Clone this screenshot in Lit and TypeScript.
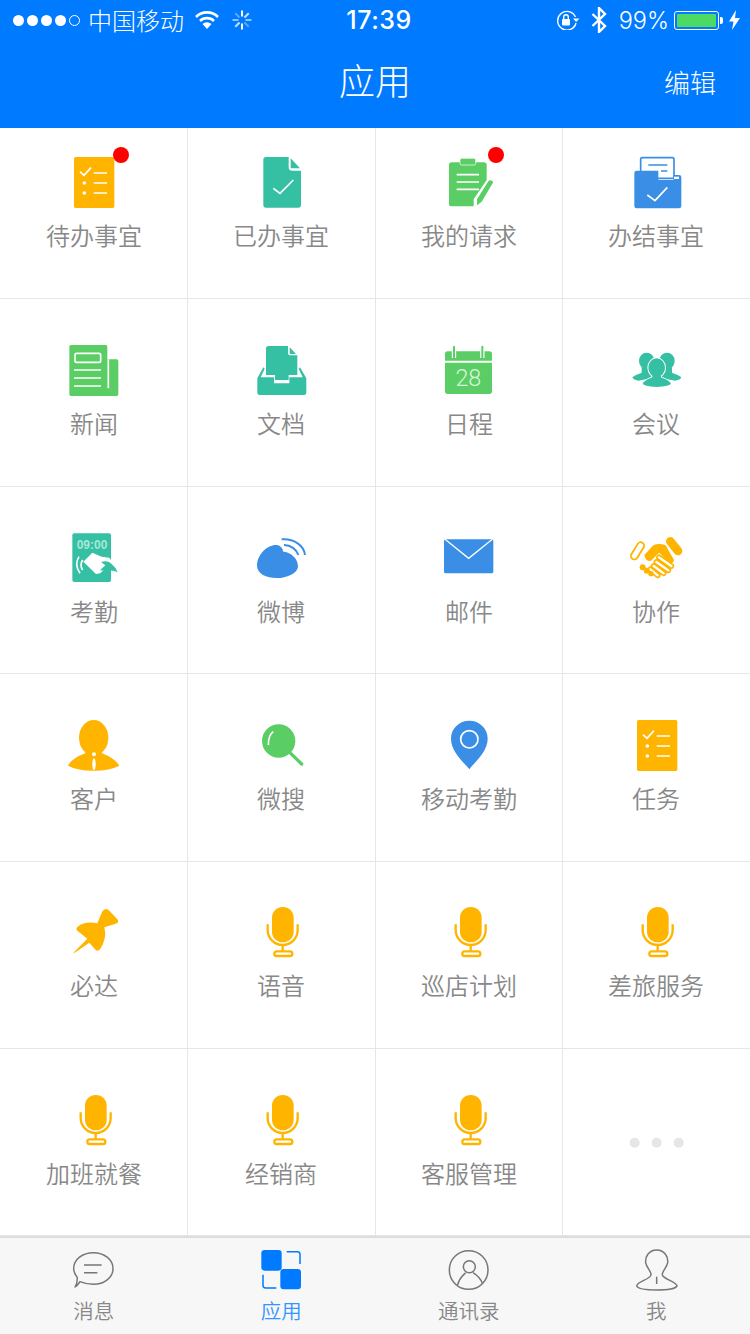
import { css, html, svg, LitElement } from "lit";
import { customElement } from "lit/decorators.js";

const AMBER = "#ffb400";
const TEAL = "#35c0a4";
const GREEN = "#5ace64";
const BLUE = "#3a8ee6";
const GREY = "#777";
const TAB_BLUE = "#007aff";

// icon paths are written in 3x coordinates, so one px on screen is 3 units
const box = (x: number, y: number, body: unknown) =>
  html`<svg class="ic" viewBox="${x} ${y} 180 156">${body}</svg>`;

const checklist = svg`
  <rect x="222" y="81" width="121" height="153" rx="5" fill=${AMBER} />
  <g fill="none" stroke="#fff" stroke-width="5">
    <path d="M240 125L252 136L273 113M281 129H321M281 159H321M281 189H321" />
  </g>
  <circle cx="253" cy="159" r="5.5" fill="#fff" />
  <circle cx="253" cy="189" r="5.5" fill="#fff" />`;

const mic = svg`
  <rect x="816" y="51" width="65" height="106" rx="32" fill=${AMBER} />
  <g fill="none" stroke=${AMBER} stroke-width="7">
    <path d="M803 103V120A45 45 0 0 0 893 120V103M848 165V184" />
    <rect x="823" y="184" width="54" height="14" rx="7" />
  </g>`;

const icons: Record<string, unknown> = {
  todo: box(192, 81, checklist),
  done: box(753, 81, svg`
    <path fill=${TEAL} d="M798 81H866V112Q866 122 876 122H903V225Q903 233 895 233H798Q790 233 790 225V89Q790 81 798 81Z" />
    <path fill=${TEAL} d="M872 85L900 115H872Z" />
    <path fill="none" stroke="#fff" stroke-width="5" d="M820 175L840 190L880 150" />`),
  request: box(192, 81, svg`
    <path fill=${GREEN} d="M230 97H326Q335 97 335 105V150L296 208V229H230Q222 229 222 221V105Q222 97 230 97Z" />
    <rect x="255" y="85" width="47" height="20" rx="5" fill=${GREEN} stroke="#fff" stroke-width="2" />
    <path fill="none" stroke="#fff" stroke-width="5" d="M245 134H312M245 156H312M245 178H312" />
    <path fill=${GREEN} d="M341 152Q348 148 355 156L320 215L306 226V208Z" />`),
  closed: box(753, 81, svg`
    <rect x="797" y="83" width="100" height="62" rx="5" fill="#fff" stroke=${BLUE} stroke-width="5" />
    <path fill="none" stroke=${BLUE} stroke-width="4" d="M820 105H877M858 123H877" />
    <path fill=${BLUE} d="M785 122H850V150H895V135H912Q919 135 919 142V228Q919 235 912 235H785Q778 235 778 228V129Q778 122 785 122Z" />
    <rect x="897" y="140" width="15" height="7" fill="#fff" />
    <path fill="none" stroke="#fff" stroke-width="5" d="M817 195L840 212L877 172" />`),
  news: box(192, 645, svg`
    <path fill=${GREEN} d="M213 645H317Q322 645 322 650V688H350Q355 688 355 693V793Q355 798 350 798H213Q208 798 208 793V650Q208 645 213 645Z" />
    <g fill="none" stroke="#fff" stroke-width="5">
      <rect x="225" y="670" width="77" height="27" rx="5" />
      <path d="M222 720H303M222 744H303M222 768H303M325 688V775" />
    </g>`),
  docs: box(753, 645, svg`
    <path fill=${TEAL} d="M806 648H864V668Q864 676 872 676H892V735H866V750H825V735H798V656Q798 648 806 648Z" />
    <path fill=${TEAL} d="M869 652L888 672H869Z" />
    <path fill=${TEAL} d="M772 745L790 712L794 716L782 742H822V760H868V742H908L896 716L900 712L919 745V788Q919 795 912 795H779Q772 795 772 788Z" />`),
  schedule: box(192, 645, svg`
    <path fill=${GREEN} d="M218 664H343Q351 664 351 672V692H210V672Q210 664 218 664Z" />
    <path fill=${GREEN} d="M210 698H351V784Q351 792 343 792H218Q210 792 210 784Z" />
    <path fill="none" stroke="#fff" stroke-width="13" d="M237 655V684M322 655V684" />
    <path fill="none" stroke=${GREEN} stroke-width="6" stroke-linecap="round" d="M237 650V682M322 650V682" />
    <text x="280" y="767" text-anchor="middle" font-family="Roboto, sans-serif" font-weight="300" font-size="70" fill="#d9f5dc">28</text>`),
  meeting: box(753, 645, svg`
    <g fill=${TEAL}>
      <ellipse cx="815" cy="693" rx="23" ry="25" />
      <path d="M772 742Q780 735 800 728V712H830V745L790 752Q775 750 772 742Z" />
      <ellipse cx="876" cy="693" rx="23" ry="25" />
      <path d="M919 742Q911 735 891 728V712H861V745L901 752Q916 750 919 742Z" />
    </g>
    <g fill="#fff" stroke="#fff" stroke-width="6">
      <ellipse cx="845" cy="713" rx="25" ry="28" />
      <path d="M803 760Q810 750 832 742V730H858V742Q880 750 888 760Q885 770 845 771Q805 770 803 760Z" />
    </g>
    <g fill=${TEAL}>
      <ellipse cx="845" cy="713" rx="25" ry="28" />
      <path d="M803 760Q810 750 832 742V730H858V742Q880 750 888 760Q885 770 845 771Q805 770 803 760Z" />
    </g>`),
  attendance: box(192, 69, svg`
    <rect x="217" y="70" width="116" height="146" rx="6" fill=${TEAL} />
    <text x="276" y="117" text-anchor="middle" font-family="'Liberation Sans', sans-serif" font-weight="700" font-size="36" fill="#a7e8d8">09:00</text>
    <path fill="none" stroke="#fff" stroke-width="5" d="M237 140Q222 163 240 190M248 150Q238 165 248 180" />
    <path fill="#fff" d="M250 155L277 128L305 140L328 143L338 158L300 190L288 192Z" />
    <path fill=${TEAL} d="M303 156Q325 148 338 165Q350 175 353 187Q338 178 322 183L300 181L316 166Z" />`),
  weibo: box(753, 69, svg`
    <path fill=${BLUE} d="M771 165C773 130 805 103 830 105C842 106 848 115 850 125C870 125 895 145 894 170C892 192 855 205 830 204C800 204 770 192 771 165Z" />
    <path fill="none" stroke=${BLUE} stroke-width="6" d="M845 88C880 85 912 105 915 135M852 105C872 105 890 118 895 135" />`),
  mail: box(192, 69, svg`
    <rect x="207" y="88" width="148" height="102" rx="5" fill=${BLUE} />
    <path fill="none" stroke="#fff" stroke-width="4" d="M210 88L281 145L352 88" />`),
  handshake: box(753, 69, svg`
    <g fill="none" stroke-linecap="round">
      <path stroke=${AMBER} stroke-width="26" d="M797 107L778 138" />
      <path stroke="#fff" stroke-width="15" d="M797 107L778 138" />
      <path stroke=${AMBER} stroke-width="26" d="M886 94L909 123" />
      <path stroke=${AMBER} stroke-width="17" d="M852 142L889 168M844 156L880 181M836 168L866 190M826 178L848 196" />
      <path stroke="#fff" stroke-width="7" d="M852 142L889 168M844 156L880 181M836 168L866 190M826 178L848 196" />
    </g>
    <circle cx="803" cy="172" r="9" fill=${AMBER} />
    <circle cx="815" cy="182" r="9" fill=${AMBER} />
    <circle cx="828" cy="191" r="8" fill=${AMBER} />
    <path fill=${AMBER} d="M808 135L835 106Q852 98 872 106L897 150Q896 160 885 160L852 128L828 152Q812 156 808 135Z" />`),
  customer: box(192, 630, svg`
    <ellipse cx="281" cy="683" rx="44" ry="53" fill=${AMBER} />
    <path fill=${AMBER} d="M204 767Q215 745 256 730V706H306V730Q345 745 358 767Q330 782 281 782Q232 782 204 767Z" />
    <circle cx="282" cy="733" r="6" fill="#fff" />
    <ellipse cx="282" cy="763" rx="5" ry="18" fill="#fff" />`),
  search: box(753, 630, svg`
    <circle cx="836" cy="693" r="50" fill=${GREEN} />
    <path fill="none" stroke=${GREEN} stroke-width="10" stroke-linecap="round" d="M872 730L905 762" />
    <path fill="none" stroke="#fff" stroke-width="5" d="M805 705Q805 675 820 665" />`),
  pin: box(192, 630, svg`
    <path fill=${BLUE} d="M283 778C265 755 228 725 228 686C228 655 253 632 283 632C313 632 338 655 338 686C338 725 300 755 283 778Z" />
    <circle cx="283" cy="688" r="26" fill="none" stroke="#fff" stroke-width="5" />`),
  task: box(189, 81, checklist),
  pushpin: box(192, 51, svg`
    <path fill=${AMBER} d="M220 188L262 146L232 122Q226 116 233 110Q255 92 292 100L306 66Q316 50 328 62L352 88Q360 98 345 102L313 112Q322 145 300 178Q292 186 285 178L268 158L224 188Z" />`),
  mic: box(753, 51, mic),
  more: box(753, 51, svg`
    <circle cx="779" cy="194" r="15" fill="#e6e6e6" />
    <circle cx="845" cy="194" r="15" fill="#e6e6e6" />
    <circle cx="911" cy="194" r="15" fill="#e6e6e6" />`),
};

const apps = [
  { icon: "todo", label: "待办事宜", dot: true },
  { icon: "done", label: "已办事宜" },
  { icon: "request", label: "我的请求", dot: true },
  { icon: "closed", label: "办结事宜" },
  { icon: "news", label: "新闻" },
  { icon: "docs", label: "文档" },
  { icon: "schedule", label: "日程" },
  { icon: "meeting", label: "会议" },
  { icon: "attendance", label: "考勤" },
  { icon: "weibo", label: "微博" },
  { icon: "mail", label: "邮件" },
  { icon: "handshake", label: "协作" },
  { icon: "customer", label: "客户" },
  { icon: "search", label: "微搜" },
  { icon: "pin", label: "移动考勤" },
  { icon: "task", label: "任务" },
  { icon: "pushpin", label: "必达" },
  { icon: "mic", label: "语音" },
  { icon: "mic", label: "巡店计划" },
  { icon: "mic", label: "差旅服务" },
  { icon: "mic", label: "加班就餐" },
  { icon: "mic", label: "经销商" },
  { icon: "mic", label: "客服管理" },
  { icon: "more", label: "" },
];

const tabIcon = (x: number, body: unknown) =>
  html`<svg class="tab-ic" viewBox="${x} 54 180 132">${body}</svg>`;

const tabs = [
  {
    label: "消息",
    icon: tabIcon(192, svg`<g fill="none" stroke=${GREY} stroke-width="4.5">
      <path d="M280 68C312 68 339 88 339 116C339 143 312 163 280 163C265 163 252 160 240 155C236 162 228 170 226 170C232 160 232 148 232 143C226 135 221 126 221 116C221 88 248 68 280 68Z" />
      <path d="M252 105H305M252 128H292" />
    </g>`),
  },
  {
    label: "应用",
    active: true,
    icon: tabIcon(753, svg`
      <rect x="784" y="60" width="61" height="62" rx="10" fill=${TAB_BLUE} />
      <rect x="841" y="117" width="62" height="61" rx="10" fill=${TAB_BLUE} />
      <path fill="none" stroke=${TAB_BLUE} stroke-width="4.5" d="M860 65H892Q900 65 900 73V102M789 134V166Q789 174 797 174H829" />`),
  },
  {
    label: "通讯录",
    icon: tabIcon(192, svg`<g fill="none" stroke=${GREY} stroke-width="4.5">
      <circle cx="281" cy="120" r="58" />
      <circle cx="283" cy="110" r="18" />
      <path d="M248 165C252 145 265 135 272 128M294 128C305 135 318 148 322 160" />
    </g>`),
  },
  {
    label: "我",
    icon: tabIcon(753, svg`<g fill="none" stroke=${GREY} stroke-width="4.5">
      <path d="M845 60C822 60 810 80 812 98C814 112 830 125 828 135C826 148 785 155 785 168C790 178 825 180 845 180C865 180 900 178 906 168C906 155 866 148 862 135C860 125 876 112 878 98C880 80 868 60 845 60Z" />
      <path d="M845 140V162" />
    </g>`),
  },
];

const spokes = [0, 45, 90, 135, 180, 225, 270, 315];

@customElement("app-root")
export class AppRoot extends LitElement {
  static styles = css`
    :host {
      display: flex;
      flex-direction: column;
      width: 750px;
      height: 1334px;
      overflow: hidden;
      background: #fff;
      font-family: "Noto Sans CJK SC", "Inter", sans-serif;
    }

    .status {
      display: grid;
      grid-template-columns: 1fr auto 1fr;
      align-items: center;
      height: 40px;
      padding: 0 10px 0 13px;
      background: #007aff;
      color: #fff;
    }

    .status-left,
    .status-right {
      display: flex;
      align-items: center;
    }

    .status-right {
      justify-content: flex-end;
    }

    .signal {
      display: flex;
      gap: 3px;
      margin-right: 8px;
    }

    .signal i {
      width: 11px;
      height: 11px;
      border-radius: 50%;
      background: #fff;
      box-sizing: border-box;
    }

    .signal i.off {
      background: none;
      border: 1px solid #fff;
    }

    .carrier {
      font-size: 24px;
      font-weight: 300;
      line-height: 30px;
    }

    .wifi {
      width: 24px;
      height: 18px;
      margin-left: 11px;
    }

    .spinner {
      width: 20px;
      height: 20px;
      margin-left: 13px;
    }

    .time {
      font-family: "Inter", sans-serif;
      font-size: 25px;
      font-weight: 500;
      letter-spacing: 0.5px;
      padding-left: 5px;
    }

    .rotate {
      width: 24px;
      height: 20px;
    }

    .bt {
      width: 16px;
      height: 26px;
      margin-left: 11px;
    }

    .percent {
      font-family: "Inter", sans-serif;
      font-size: 23.5px;
      font-weight: 300;
      margin-left: 12px;
    }

    .battery {
      box-sizing: border-box;
      width: 45px;
      height: 19px;
      margin-left: 5px;
      padding: 2px;
      border: 1px solid #fff;
      border-radius: 3px;
    }

    .battery div {
      height: 100%;
      border-radius: 1px;
      background: #4cd964;
    }

    .nub {
      width: 3px;
      height: 7px;
      margin-left: 1px;
      border-radius: 0 2px 2px 0;
      background: #fff;
    }

    .bolt {
      width: 11px;
      height: 20px;
      margin-left: 6px;
    }

    .nav {
      position: relative;
      display: flex;
      align-items: center;
      justify-content: center;
      height: 88px;
      padding-bottom: 10px;
      box-sizing: border-box;
      background: #007aff;
      color: #fff;
    }

    .title {
      font-size: 36px;
      font-weight: 300;
    }

    .edit {
      position: absolute;
      right: 34px;
      margin-top: 4px;
      font-size: 26px;
      font-weight: 300;
    }

    .grid {
      display: grid;
      grid-template-columns: 188px 188px 187px 187px;
      grid-template-rows: 171px 188px 187px 188px 187px 187px;
    }

    .cell {
      display: flex;
      flex-direction: column;
      align-items: center;
      box-sizing: border-box;
      padding-top: 46px;
      box-shadow: inset -1px -1px 0 #e6e6e6;
    }

    .cell:nth-child(-n + 4) {
      padding-top: 29px;
    }

    .cell:nth-child(n + 17):nth-child(-n + 20) {
      padding-top: 45px;
    }

    .cell:nth-child(4n + 2) {
      padding-right: 2px;
    }

    .cell:nth-child(4n + 3),
    .cell:nth-child(4n) {
      padding-right: 1px;
    }

    .cell:nth-child(4n) {
      box-shadow: inset 0 -1px 0 #e6e6e6;
    }

    .icon {
      position: relative;
      width: 60px;
      height: 52px;
    }

    .ic {
      display: block;
      width: 60px;
      height: 52px;
      overflow: visible;
    }

    .dot {
      position: absolute;
      left: 49px;
      top: -10px;
      width: 16px;
      height: 16px;
      border-radius: 50%;
      background: #f00;
    }

    .label {
      margin-top: 11px;
      font-size: 24px;
      font-weight: 350;
      line-height: 30px;
      color: #888;
    }

    .tabbar {
      flex: 1;
      display: grid;
      grid-template-columns: repeat(4, 1fr);
      border-top: 2px solid #ddd;
      background: #f7f7f7;
    }

    .tab {
      display: flex;
      flex-direction: column;
      align-items: center;
      padding-top: 10px;
      color: #888;
    }

    .tab.active {
      color: #3395ff;
    }

    .tab-ic {
      display: block;
      width: 60px;
      height: 44px;
      overflow: visible;
    }

    .tab span {
      margin-top: 4px;
      font-size: 20.5px;
      font-weight: 350;
      line-height: 28px;
    }
  `;

  render() {
    return html`
      <div class="status">
        <div class="status-left">
          <div class="signal"><i></i><i></i><i></i><i></i><i class="off"></i></div>
          <span class="carrier">中国移动</span>
          <svg class="wifi" viewBox="0 0 24 18">
            <path fill="none" stroke="#fff" stroke-width="2.6" d="M1 6A15.5 15.5 0 0 1 23 6M5 10A10 10 0 0 1 19 10" />
            <path fill="#fff" d="M12 18L7.5 13A6.5 6.5 0 0 1 16.5 13Z" />
          </svg>
          <svg class="spinner" viewBox="0 0 20 20">
            ${spokes.map(
              (a, i) =>
                svg`<path d="M10 0.5V6.5" stroke="#fff" stroke-width="2" opacity=${1 - (i % 4) * 0.22} transform="rotate(${a} 10 10)" />`
            )}
          </svg>
        </div>
        <div class="time">17:39</div>
        <div class="status-right">
          <svg class="rotate" viewBox="0 0 24 20">
            <path fill="none" stroke="#fff" stroke-width="1.4" d="M20 13A9.3 9.3 0 1 1 19.5 7" />
            <path fill="#fff" d="M17 8.5H23.5L20.2 12Z" />
            <rect x="6" y="9" width="8" height="6.5" rx="1" fill="#fff" />
            <path fill="none" stroke="#fff" stroke-width="1.4" d="M7.7 9V7A2.3 2.3 0 0 1 12.3 7V9" />
          </svg>
          <svg class="bt" viewBox="0 0 16 26">
            <path fill="none" stroke="#fff" stroke-width="2.4" d="M1.5 7L14 19L8 25V1L14 7L1.5 19" />
          </svg>
          <span class="percent">99%</span>
          <div class="battery"><div></div></div>
          <div class="nub"></div>
          <svg class="bolt" viewBox="0 0 11 20">
            <path fill="#fff" d="M7 0L0 11.5H4.5L3 20L11 8H6Z" />
          </svg>
        </div>
      </div>
      <div class="nav">
        <span class="title">应用</span>
        <span class="edit">编辑</span>
      </div>
      <div class="grid">
        ${apps.map(
          (a) => html`
            <div class="cell">
              <div class="icon">
                ${icons[a.icon]}
                ${a.dot ? html`<span class="dot"></span>` : ""}
              </div>
              <div class="label">${a.label}</div>
            </div>
          `
        )}
      </div>
      <div class="tabbar">
        ${tabs.map(
          (t) => html`
            <div class="tab ${t.active ? "active" : ""}">
              ${t.icon}
              <span>${t.label}</span>
            </div>
          `
        )}
      </div>
    `;
  }
}
